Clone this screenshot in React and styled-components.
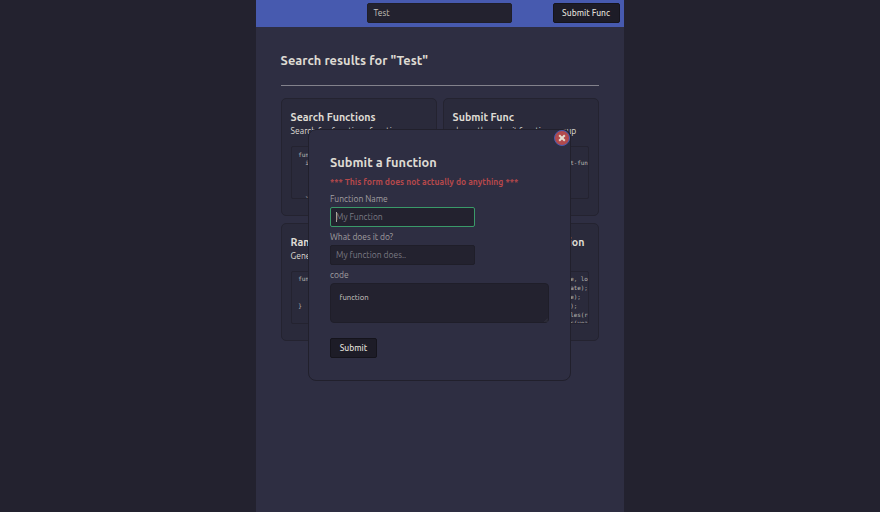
import React, { useState } from 'react'
import styled, { createGlobalStyle } from "styled-components"

const cards = [
    {
        title: "Search Functions",
        text: "Search for functions function",
        code: "function search() {\n  if (!query) {\n    return [];\n    }\n\n  }"
    },
    {
        title: "Submit Func",
        text: "shows the submit function popup",
        spacing: "-0.14px",
        code: "\n  const btn = getElement('submit-func');\n"
    },
    {
        title: "Random Number",
        text: "Generates a random number",
        code: "function random() {\n\n\n}"
    },
    {
        title: "Date Formatting Function",
        titleSpacing: "0.12px",
        text: "Formats a date",
        code: "function formatDateToString(date, locale) {\n  const newDate = new Date(theDate);\n  const hours = getHours(theDate);\n  const minutes = getMinutes(dt);\n  const values = locales.variables(rest);\n  const seconds = getLocalMillis(year);"
    }
]

const App = () => {

    const [search, setSearch] = useState("Test")
    const [open, setOpen] = useState(true)

    return (
        <>
            <GlobalStyle />
            <Page>
                <Header>
                    <SearchInput value={search} onChange={(e) => setSearch(e.target.value)} />
                    <Button $width="67px" onClick={() => setOpen(true)}>Submit Func</Button>
                </Header>
                <Main>
                    <Heading>Search results for "{search}"</Heading>
                    <Grid>
                        {cards.map((card) => (
                            <Card key={card.title}>
                                <CardTitle $spacing={card.titleSpacing}>{card.title}</CardTitle>
                                <CardText $spacing={card.spacing}>{card.text}</CardText>
                                <Code>{card.code}</Code>
                            </Card>
                        ))}
                    </Grid>
                </Main>
                {
                    open && <Modal>
                        <Close aria-label="Close" onClick={() => setOpen(false)}>
                            <svg width="8" height="8" viewBox="0 0 8 8">
                                <path d="M1.2 1.2L6.8 6.8M6.8 1.2L1.2 6.8" stroke="#e4ddd0" strokeWidth="2" />
                            </svg>
                        </Close>
                        <ModalTitle>Submit a function</ModalTitle>
                        <Warning>*** This form does not actually do anything ***</Warning>
                        <Label>Function Name</Label>
                        <Field $active>
                            <Caret />
                            <Placeholder>My Function</Placeholder>
                        </Field>
                        <Label>What does it do?</Label>
                        <Field>
                            <Placeholder>My function does..</Placeholder>
                        </Field>
                        <Label>code</Label>
                        <TextArea>
                            function
                            <Grip width="4" height="4" viewBox="0 0 4 4">
                                <path d="M0.5 4L4 0.5M2.5 4L4 2.5" stroke="#4a4a55" strokeWidth="0.5" />
                            </Grip>
                        </TextArea>
                        <Button $width="47px">Submit</Button>
                    </Modal>
                }
            </Page>
        </>
    )
}

const GlobalStyle = createGlobalStyle`
*{
    box-sizing:border-box;
}
body{
    margin:0;
    background:#23222f;
    color:#dedbd3;
    font-family:Ubuntu, "Noto Sans", sans-serif;
    overflow:hidden;
}
h1,h2,h3,p{
    margin:0;
    white-space:nowrap;
}
button,input{
    font-family:inherit;
}`

const Page = styled.div`
position:relative;
width:368.4px;
height:512px;
margin-left:255.6px;
background:#2e2e42;`

const Header = styled.header`
display:flex;
justify-content:space-between;
height:27px;
padding:3px 4.4px 4px 111.4px;
background:#475aaf;`

const SearchInput = styled.input`
width:145px;
height:20px;
padding:0 5.5px;
border:1px solid #1f1e29;
border-radius:2px;
background:#23222f;
color:#c6c3bd;
font-size:8.53px;
outline:none;`

const Button = styled.button`
display:flex;
align-items:center;
justify-content:center;
width:${(props) => props.$width};
height:20px;
padding:0;
border:1px solid #15141c;
border-radius:2px;
background:#1d1c27;
color:#dedbd3;
font-size:8.53px;
font-weight:500;
white-space:nowrap;`

const Main = styled.main`
padding:23px 25px 0;`

const Heading = styled.h1`
height:36px;
margin-bottom:12px;
border-bottom:1px solid #83828c;
font-size:12.8px;
line-height:20px;
letter-spacing:0.04px;`

const Grid = styled.div`
display:grid;
grid-template-columns:156px 156px;
grid-auto-rows:118px;
gap:6.6px 6px;`

const Card = styled.section`
padding:11px 9px;
overflow:hidden;
border:1px solid #242330;
border-radius:5px;
background:#2a2a3b;`

const CardTitle = styled.h2`
font-size:10.67px;
line-height:14px;
letter-spacing:${(props) => props.$spacing || "0"};`

const CardText = styled.p`
font-size:8.53px;
line-height:14px;
letter-spacing:${(props) => props.$spacing || "0"};`

const Code = styled.pre`
height:53px;
margin:8.4px 0 0;
padding:3.2px 6.6px;
overflow:hidden;
border:1px solid #242330;
border-radius:2px;
background:#2a2a3b;
color:#bdbab5;
font-family:"DejaVu Sans Mono", monospace;
font-size:5.9px;
line-height:8.85px;`

const Modal = styled.div`
position:absolute;
top:129px;
left:52.4px;
width:263px;
height:252px;
padding:22px 20px 0 21px;
border:1px solid #21202c;
border-radius:8px;
background:#2e2e42;`

const Close = styled.button`
position:absolute;
top:0;
right:-0.5px;
display:flex;
align-items:center;
justify-content:center;
width:16px;
height:16px;
padding:0;
border:1px solid #475aaf;
border-radius:50%;
background:#b14a4d;`

const ModalTitle = styled.h2`
font-size:12.8px;
line-height:20px;
letter-spacing:0.03px;`

const Warning = styled.p`
color:#b5484b;
font-size:8.53px;
font-weight:700;
line-height:20px;
letter-spacing:0.02px;`

const Label = styled.p`
height:15px;
color:#a19fa0;
font-size:8.53px;
line-height:14px;`

const Field = styled.div`
display:flex;
align-items:center;
width:145px;
height:20px;
margin-bottom:3.2px;
padding:0 5px;
border:1px solid ${(props) => props.$active ? "#3a9a69" : "#1f1e29"};
border-radius:2px;
background:#23222f;`

const Caret = styled.span`
width:1px;
height:10px;
margin-right:-1px;
background:#aaa8a5;`

const Placeholder = styled.span`
color:#7b7a84;
font-size:8.53px;`

const TextArea = styled.div`
position:relative;
width:219px;
height:40px;
margin-bottom:14.8px;
padding:6px 8.5px;
border:1px solid #1f1e29;
border-radius:4px;
background:#23222f;
color:#cfccc5;
font-size:7.7px;
line-height:14px;`

const Grip = styled.svg`
position:absolute;
right:0;
bottom:0;`

export default App
